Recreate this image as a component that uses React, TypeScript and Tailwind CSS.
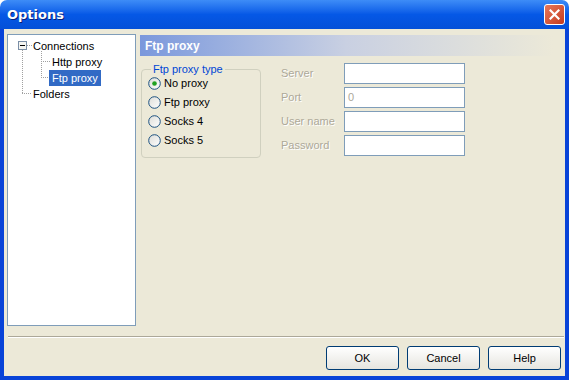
import { useState } from "react";

const FONT = { fontFamily: '"Liberation Sans", Arial, sans-serif' };

function Radio({ checked }: { checked?: boolean }) {
  return (
    <svg width="13" height="13" viewBox="0 0 13 13" className="shrink-0">
      <defs>
        <linearGradient id="rg" x1="0" y1="0" x2="1" y2="1">
          <stop offset="0" stopColor="#dcdcd7" />
          <stop offset="1" stopColor="#ffffff" />
        </linearGradient>
      </defs>
      <circle cx="6.5" cy="6.5" r="5.8" fill="url(#rg)" stroke="#1c5180" strokeWidth="1" />
      {checked && <circle cx="6.5" cy="6.5" r="2.3" fill="#21a121" />}
    </svg>
  );
}

function Field({ label, value }: { label: string; value?: string }) {
  return (
    <div className="flex items-center h-[21px]">
      <span className="w-[63px] text-[#aca899] [text-shadow:1px_1px_0_#fff]">{label}</span>
      <div className="w-[121px] h-[21px] bg-white border border-[#7f9db9] px-[3px] flex items-center text-[#aca899]">
        {value}
      </div>
    </div>
  );
}

function Button({ children }: { children: string }) {
  return (
    <button className="w-[73px] h-[24px] rounded-[3px] border border-[#003c74] bg-gradient-to-b from-white to-[#e6e5df] text-black text-[11px]">
      {children}
    </button>
  );
}

export default function App() {
  const [selected] = useState("No proxy");
  return (
    <div style={FONT} className="w-[569px] h-[380px] flex flex-col text-[11px] text-black select-none">
      {/* Title bar */}
      <div className="h-[29px] rounded-t-[7px] flex items-center justify-between pl-[7px] pr-[4px] bg-gradient-to-b from-[#3d8cf7] via-[#0558e6] to-[#0450d8]">
        <span className="text-white font-bold text-[13px] [text-shadow:1px_1px_0_#0a1f7a]" style={{ fontFamily: '"DejaVu Sans", sans-serif' }}>
          Options
        </span>
        <div className="w-[21px] h-[21px] rounded-[3px] border border-white bg-gradient-to-br from-[#e8775a] to-[#c4391a] flex items-center justify-center">
          <svg width="11" height="11" viewBox="0 0 11 11">
            <path d="M1.5 1.5 L9.5 9.5 M9.5 1.5 L1.5 9.5" stroke="#fff" strokeWidth="2.2" strokeLinecap="square" />
          </svg>
        </div>
      </div>

      {/* Body */}
      <div className="flex-1 flex flex-col bg-[#ece9d8] border-l-4 border-r-4 border-b-4 border-[#0843d8]">
        <div className="flex pt-[5px] pl-[3px]">
          {/* Tree */}
          <div className="w-[129px] h-[292px] bg-white border border-[#7f9db9] relative">
            <svg className="absolute left-0 top-0" width="60" height="70">
              <g stroke="#a0a0a0" strokeDasharray="1 1" strokeWidth="1">
                <line x1="14.5" y1="15" x2="14.5" y2="59" />
                <line x1="14" y1="58.5" x2="24" y2="58.5" />
                <line x1="33.5" y1="16" x2="33.5" y2="43" />
                <line x1="33" y1="26.5" x2="42" y2="26.5" />
                <line x1="33" y1="42.5" x2="42" y2="42.5" />
                <line x1="19" y1="10.5" x2="24" y2="10.5" />
              </g>
              <rect x="10.5" y="6.5" width="8" height="8" fill="#f4f4f0" stroke="#7a8ea6" />
              <line x1="12" y1="10.5" x2="17" y2="10.5" stroke="#000" />
            </svg>
            <div className="absolute left-[25px] top-[3px] leading-[16px] h-[16px]">Connections</div>
            <div className="absolute left-[44px] top-[19px] leading-[16px] h-[16px]">Http proxy</div>
            <div className="absolute left-[41px] top-[35px] leading-[16px] h-[16px] px-[3px] bg-[#316ac5] text-white">Ftp proxy</div>
            <div className="absolute left-[25px] top-[51px] leading-[16px] h-[16px]">Folders</div>
          </div>

          {/* Right panel */}
          <div className="ml-[4px] flex-1 flex flex-col">
            <div className="w-[413px] h-[21px] mt-[1px] flex items-center pl-[5px] text-white font-bold text-[12px] bg-gradient-to-r from-[#7b98dc] via-[#c9d0e2] to-[#ece9d8]">
              Ftp proxy
            </div>
            <div className="flex mt-[7px]">
              {/* Group box */}
              <fieldset className="w-[120px] h-[95px] border border-[#d0d0bf] rounded-[4px] ml-[1px] pl-[6px] pt-[1px]">
                <legend className="text-[#0046d5] px-[2px] ml-[3px] leading-[13px]">Ftp proxy type</legend>
                <div className="flex flex-col gap-[6px]">
                  {["No proxy", "Ftp proxy", "Socks 4", "Socks 5"].map((t) => (
                    <div key={t} className="flex items-center gap-[3px] h-[13px]">
                      <Radio checked={selected === t} />
                      <span>{t}</span>
                    </div>
                  ))}
                </div>
              </fieldset>
              <div className="ml-[20px] flex flex-col gap-[3px]">
                <Field label="Server" />
                <Field label="Port" value="0" />
                <Field label="User name" />
                <Field label="Password" />
              </div>
            </div>
          </div>
        </div>

        {/* Separator */}
        <div className="mt-[10px] ml-[4px] mr-[1px] border-t border-[#aca899] border-b border-b-white" />

        {/* Buttons */}
        <div className="flex justify-end gap-[8px] mt-[8px] pr-[4px]">
          <Button>OK</Button>
          <Button>Cancel</Button>
          <Button>Help</Button>
        </div>
      </div>
    </div>
  );
}
